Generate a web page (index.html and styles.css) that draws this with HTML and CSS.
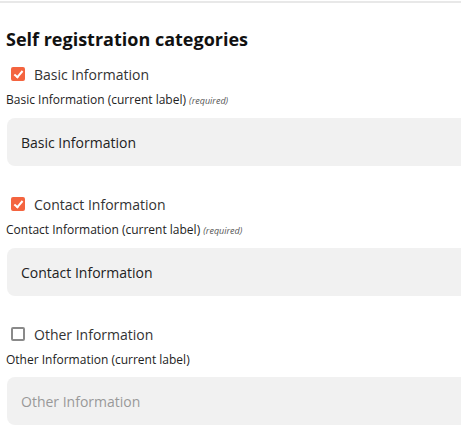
FILE: index.html
```html
<!DOCTYPE html>
<html lang="en">
<head>
    <meta charset="UTF-8">
    <meta name="viewport" content="width=device-width, initial-scale=1.0">
    <title>Self registration categories</title>
    <link rel="stylesheet" href="styles.css">
</head>
<body>

    <div class="panel">
        <h2>Self registration categories</h2>

        <div class="category">
            <label class="check-row">
                <span class="checkbox checked"></span>
                <span>Basic Information</span>
            </label>
            <div class="field-label">Basic Information (current label) <em>(required)</em></div>
            <div class="field-input">Basic Information</div>
        </div>

        <div class="category">
            <label class="check-row">
                <span class="checkbox checked"></span>
                <span>Contact Information</span>
            </label>
            <div class="field-label">Contact Information (current label) <em>(required)</em></div>
            <div class="field-input">Contact Information</div>
        </div>

        <div class="category">
            <label class="check-row">
                <span class="checkbox"></span>
                <span>Other Information</span>
            </label>
            <div class="field-label">Other Information (current label)</div>
            <div class="field-input placeholder">Other Information</div>
        </div>
    </div>

</body>
</html>
```

FILE: styles.css
```css
/* Base styles */
* {
    margin: 0;
    padding: 0;
    box-sizing: border-box;
}

body {
    font-family: 'Open Sans', 'Segoe UI', sans-serif;
    color: #222222;
    background-color: #ffffff;
    overflow: hidden;
}

.panel {
    width: 100%;
    border-top: 2px solid #e8e8e8;
    margin-top: 1px;
    padding: 24px 0 0 6px;
}

h2 {
    font-size: 18px;
    font-weight: 700;
    color: #111111;
    line-height: 24px;
    margin-bottom: 13px;
}

.category {
    margin-bottom: 28px;
}

.check-row {
    display: flex;
    align-items: center;
    gap: 9px;
    height: 20px;
    padding-left: 5px;
    font-size: 14px;
    color: #333333;
}

.checkbox {
    width: 14px;
    height: 14px;
    border: 2px solid #8a8a8a;
    border-radius: 2px;
    position: relative;
}

.checkbox.checked {
    background-color: #f4643f;
    border-color: #f4643f;
}

.checkbox.checked::after {
    content: '';
    position: absolute;
    left: 3px;
    top: 0px;
    width: 3px;
    height: 7px;
    border: solid #ffffff;
    border-width: 0 2px 2px 0;
    transform: rotate(40deg);
}

.field-label {
    margin-top: 8px;
    font-size: 12px;
    line-height: 16px;
    color: #222222;
}

.field-label em {
    font-size: 9px;
    color: #555555;
}

.field-input {
    margin-top: 9px;
    margin-left: 1px;
    height: 48px;
    padding: 0 14px;
    display: flex;
    align-items: center;
    background-color: #f1f1f1;
    border-radius: 8px 0 0 8px;
    font-size: 14px;
    color: #222222;
}

.field-input.placeholder {
    color: #999999;
}
```
